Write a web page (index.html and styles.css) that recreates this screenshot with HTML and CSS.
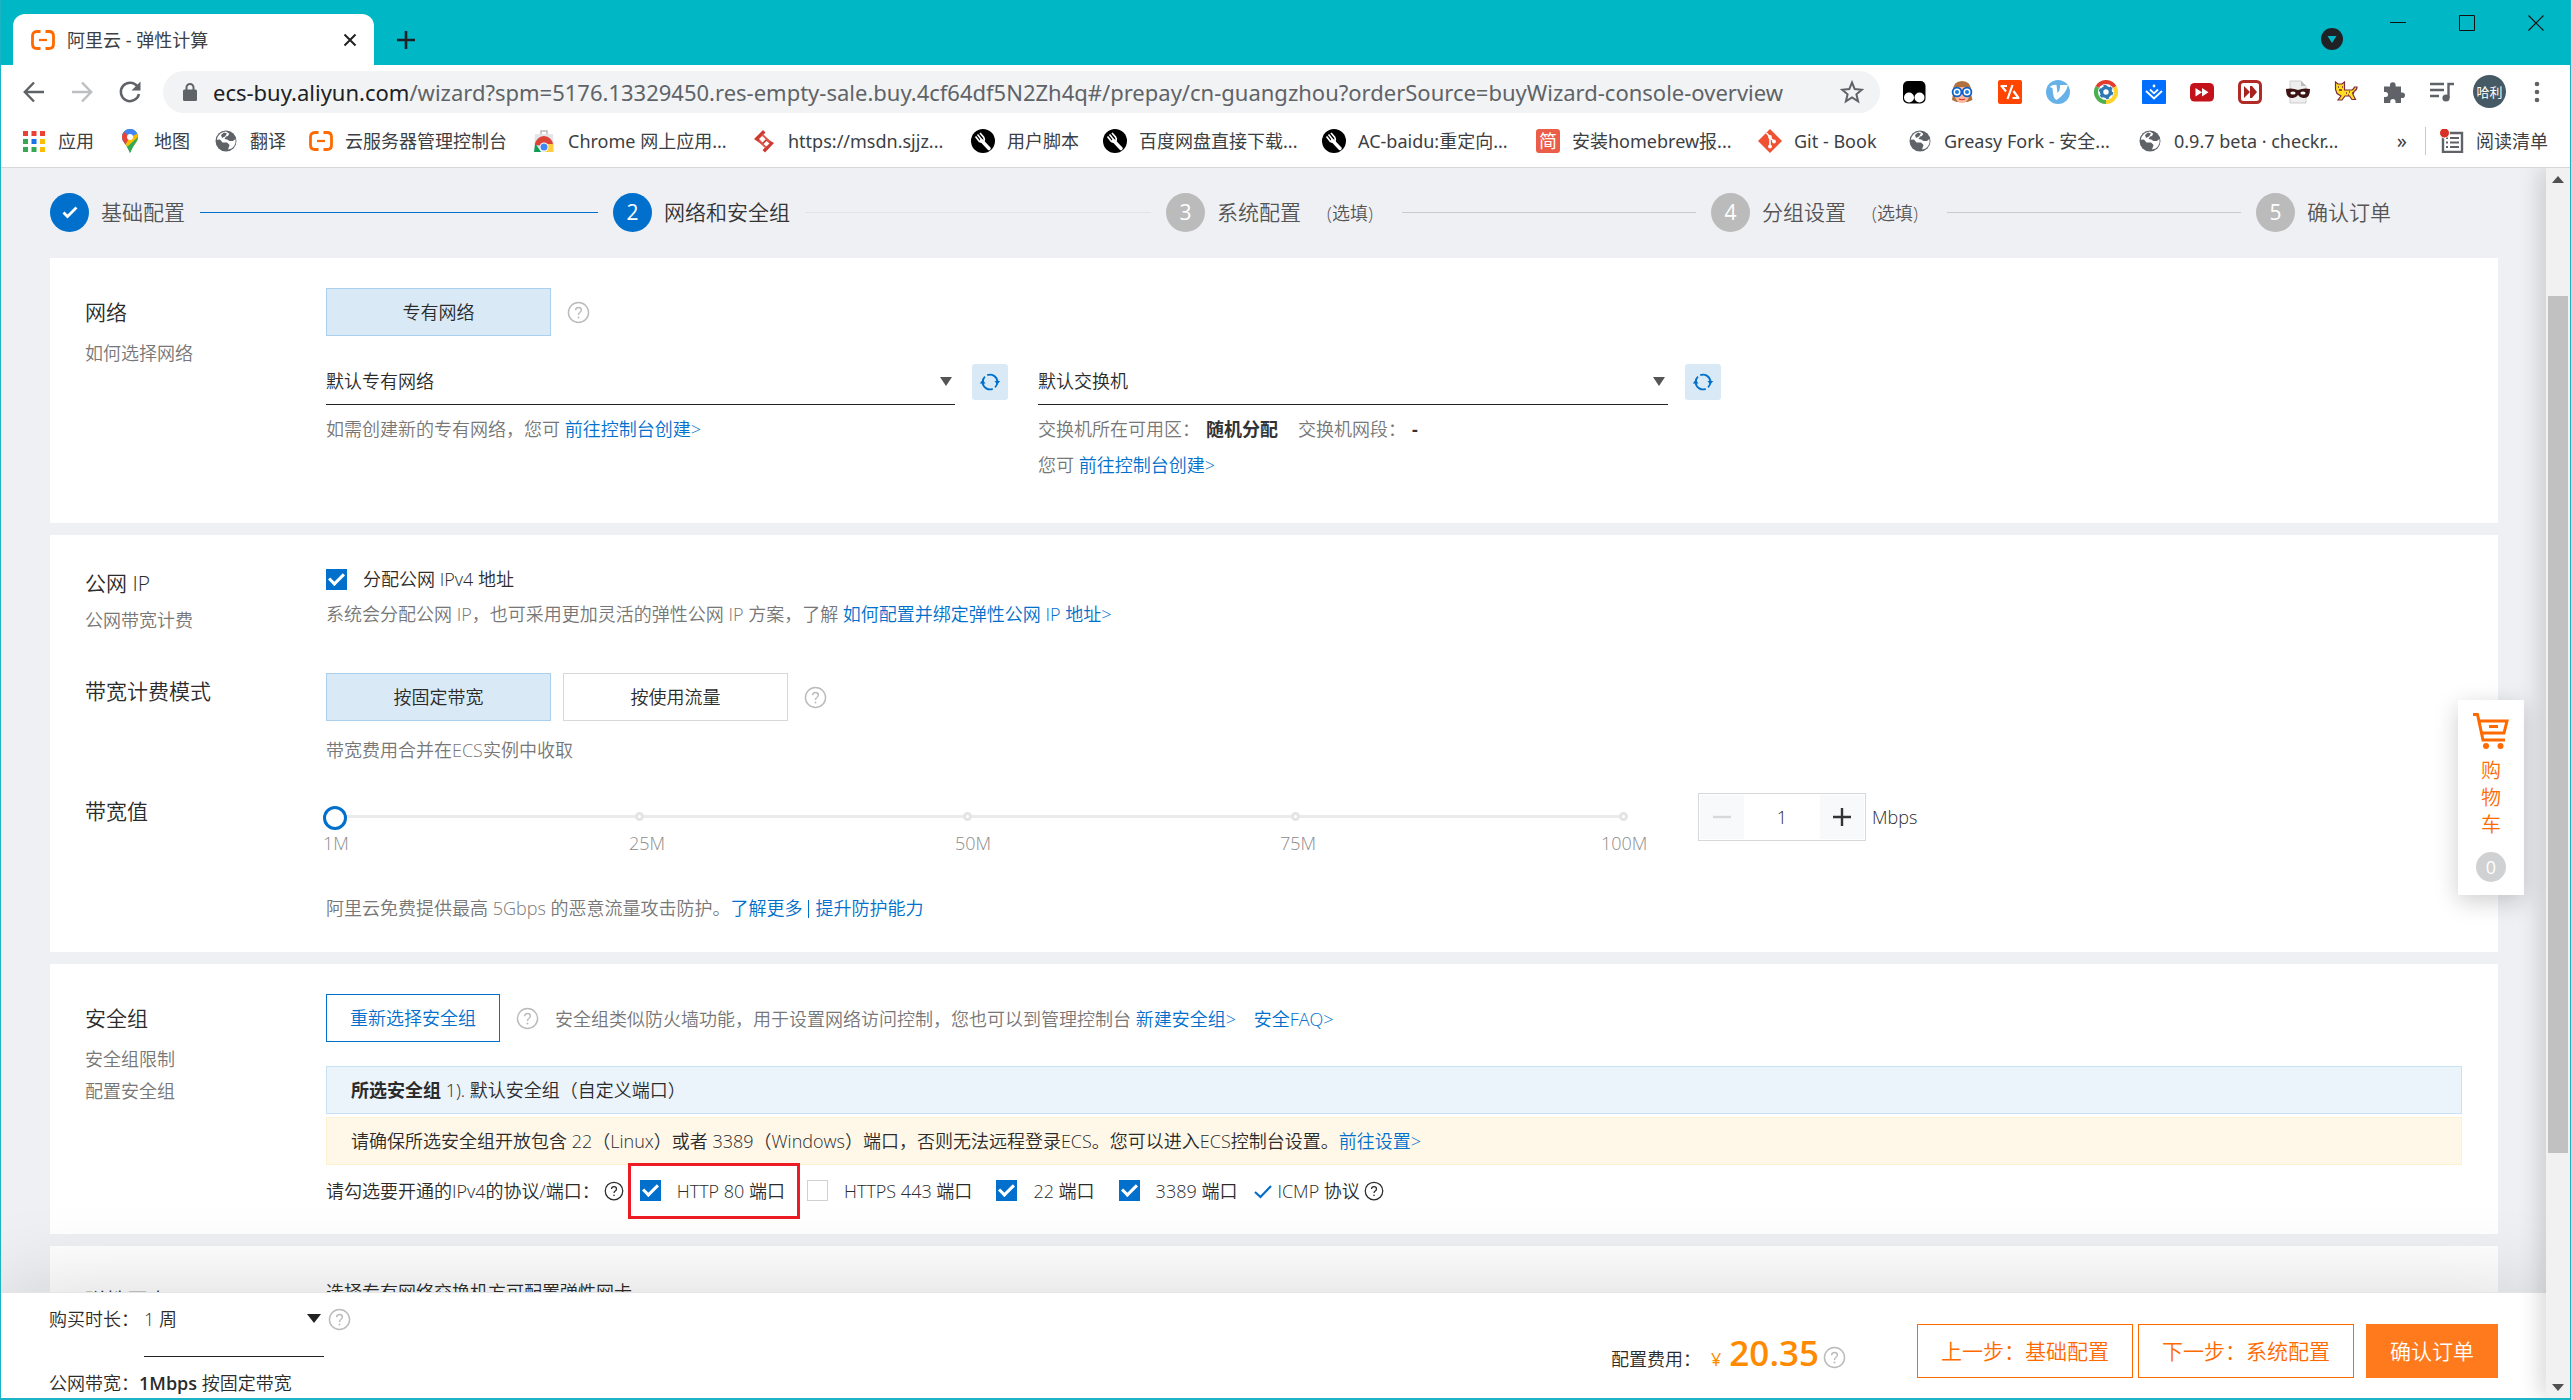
FILE: index.html
```html
<!DOCTYPE html>
<html lang="zh-CN">
<head>
<meta charset="utf-8">
<title>阿里云 - 弹性计算</title>
<link rel="stylesheet" href="styles.css">
</head>
<body>
<svg class="defs" aria-hidden="true">
  <symbol id="aliyun" viewBox="0 0 24 24"><path d="M9.500 3.500H6Q1.500 3.500 1.500 8v8q0 4.500 4.500 4.500h3.500M14.500 3.500H18q4.500 0 4.500 4.500v8q0 4.500-4.500 4.500h-3.500" fill="none" stroke="#ff6a00" stroke-width="2.800"/><path d="M8 12h8" stroke="#ff6a00" stroke-width="2.200"/></symbol>
  <symbol id="globe" viewBox="0 0 24 24"><circle cx="12" cy="12" r="10.500" fill="#5f6368"/><path d="M5 6q2-3 7-3.600l3 2.100q0 2.500-3 3l-1.500 2.500q3 0 5 2h3.500l2.400-2q1 6-3.400 9.200-2 1-4 1.200l1.600-4.400-2.600-2.500H8.500L6 10.500l-3.200.3Q3 8 5 6z" fill="#fff"/><path d="M10 3.500l3 1-2 3-3 1.500-1-3zM3 12.500l4 1 2 3 3 1v3.500q-8-.5-9-8.500z" fill="#5f6368"/></symbol>
  <symbol id="wrench" viewBox="0 0 24 24"><circle cx="12" cy="12" r="12" fill="#000"/><path d="M10.500 11.500l7.500 8" stroke="#fff" stroke-width="3.400" stroke-linecap="round"/><path d="M4.500 7.500l4 5q3 1.500 4.500-.5.800-2-.5-4L9 4" fill="none" stroke="#fff" stroke-width="1.700"/><path d="M6.500 5.500l4 5" stroke="#fff" stroke-width="1.600"/></symbol>
  <symbol id="help" viewBox="0 0 24 24"><circle cx="12" cy="12" r="10.500" fill="none" stroke="currentColor" stroke-width="1.500"/><path d="M9 9.700q0-3 3-3t3 2.800q0 1.400-1.600 2.500Q12 12.900 12 14.500" fill="none" stroke="currentColor" stroke-width="1.500"/><circle cx="12" cy="17.200" r="1" fill="currentColor"/></symbol>
  <symbol id="refresh" viewBox="0 0 24 24"><path d="M4 14.500V12a8 8 0 0 1 2.500-5.800M9 4.600A8 8 0 0 1 20 11v2M20 9.500V12a8 8 0 0 1-2.500 5.800M15 19.400A8 8 0 0 1 4 13" fill="none" stroke="#0070cc" stroke-width="2"/><path d="M.8 13.500L4 9.600l3.200 3.900zM16.800 10.800l3.200 4 3.200-4z" fill="#0070cc"/></symbol>
</svg>

<header class="browser">
  <div class="tabstrip">
    <div class="tab">
      <svg class="i24"><use href="#aliyun"/></svg>
      <span class="tab-title">阿里云 - 弹性计算</span>
      <button class="plain" aria-label="关闭标签页"><svg class="i16" viewBox="0 0 16 16"><path d="M2.500 2.500l11 11M13.500 2.500l-11 11" stroke="#202124" stroke-width="2"/></svg></button>
    </div>
    <button class="plain newtab" aria-label="新标签页"><svg class="i20" viewBox="0 0 20 20"><path d="M10 1v18M1 10h18" stroke="#202124" stroke-width="2.600"/></svg></button>
    <div class="window-buttons">
      <button class="plain tabsearch" aria-label="搜索标签页"><svg class="i24" viewBox="0 0 24 24"><circle cx="12" cy="12" r="11" fill="#202124"/><path d="M7.500 9h9L12 16z" fill="#00b7c5"/></svg></button>
      <button class="plain" aria-label="最小化"><svg class="i16" viewBox="0 0 16 16"><path d="M0 7.500h16" stroke="#111"/></svg></button>
      <button class="plain" aria-label="最大化"><svg class="i16" viewBox="0 0 16 16"><path d="M.5.5h15v15H.5z" fill="none" stroke="#111"/></svg></button>
      <button class="plain" aria-label="关闭"><svg class="i16" viewBox="0 0 16 16"><path d="M.5.5l15 15M15.500.5l-15 15" stroke="#111" stroke-width="1.200"/></svg></button>
    </div>
  </div>

  <div class="toolbar">
    <button class="plain" aria-label="后退"><svg class="i24" viewBox="0 0 24 24"><path d="M22 12H3M12 2.500L2.800 12l9.200 9.500" fill="none" stroke="#5f6368" stroke-width="2.400"/></svg></button>
    <button class="plain" aria-label="前进"><svg class="i24" viewBox="0 0 24 24"><path d="M2 12h19M12 2.500l9.200 9.500-9.200 9.500" fill="none" stroke="#bcbec1" stroke-width="2.400"/></svg></button>
    <button class="plain" aria-label="重新加载"><svg class="i24" viewBox="0 0 24 24"><path d="M19.500 6.500A9.200 9.200 0 1 0 21 14" fill="none" stroke="#5f6368" stroke-width="2.500"/><path d="M22.500 1.500v9h-9z" fill="#5f6368"/></svg></button>
    <div class="omnibox">
      <svg class="lock" viewBox="0 0 14 20"><path d="M3.500 9V5.500a3.500 3.500 0 0 1 7 0V9" fill="none" stroke="#5f6368" stroke-width="2"/><rect x="0" y="7.500" width="14" height="11.500" rx="1.500" fill="#5f6368"/></svg>
      <span class="url"><b>ecs-buy.aliyun.com</b>/wizard?spm=5176.13329450.res-empty-sale.buy.4cf64df5N2Zh4q#/prepay/cn-guangzhou?orderSource=buyWizard-console-overview</span>
      <svg class="i24" viewBox="0 0 24 24"><path d="M12 2.500l2.700 6.600 7.100.6-5.400 4.600 1.700 7L12 17.500l-6.100 3.800 1.700-7-5.400-4.600 7.100-.6z" fill="none" stroke="#5f6368" stroke-width="2"/></svg>
    </div>
    <div class="extensions">
      <svg class="i24" viewBox="0 0 24 24"><rect x="1" y="1" width="22.500" height="22.500" rx="5" fill="#000"/><circle cx="7" cy="17.500" r="5" fill="#fff"/><circle cx="17.500" cy="17.500" r="5" fill="#fff"/></svg>
      <svg class="i24" viewBox="0 0 24 24"><path d="M2 20q1-5 1-9Q3 1 12 1t9 10q0 4 1.500 9l-5 2h-11z" fill="#b0703f"/><path d="M5 8q7-2 14 0v9q-2 6-7 6t-7-6z" fill="#ffb79a"/><circle cx="7" cy="12" r="4.400" fill="#fff" stroke="#0c60c8" stroke-width="1.800"/><circle cx="17" cy="12" r="4.400" fill="#fff" stroke="#0c60c8" stroke-width="1.800"/><circle cx="7" cy="12" r="2" fill="#1c7de0"/><circle cx="17" cy="12" r="2" fill="#1c7de0"/><path d="M9 19q3 1.500 6 0" fill="none" stroke="#c33" stroke-width="1.200"/></svg>
      <svg class="i24" viewBox="0 0 24 24"><rect width="24" height="24" rx="2" fill="#ff4500"/><path d="M9 6H3.500l4.500 5.500M14.500 5L9.500 19M15.500 11l5 7H14.500" fill="none" stroke="#fff" stroke-width="2.200" stroke-linejoin="round"/></svg>
      <svg class="i24" viewBox="0 0 24 24"><circle cx="12" cy="12" r="12" fill="#66b2e8"/><path d="M3.500 7q4-3 7-2l1 8q3-3 2.500-8h8q-2 9-11.500 15Q7 19 6.500 8z" fill="#fff"/></svg>
      <svg class="i24" viewBox="0 0 24 24"><path d="M12 12L1.600 6a12 12 0 0 1 20.800 0z" fill="#e33b2e"/><path d="M12 12L22.400 6A12 12 0 0 1 12 24z" fill="#fdd32c"/><path d="M12 12v12A12 12 0 0 1 1.600 6z" fill="#4caf50"/><circle cx="12" cy="12" r="8" fill="#fff"/><circle cx="12" cy="12" r="4.400" fill="none" stroke="#2f77b5" stroke-width="3.400"/><circle cx="12" cy="12" r="6" fill="none" stroke="#2f77b5" stroke-width="2.400" stroke-dasharray="3 3.280"/></svg>
      <svg class="i24" viewBox="0 0 24 24"><rect width="24" height="24" rx="1" fill="#006eff"/><path d="M4 11l8 7.500 8-7.500M8 9.500l4 3.800 4-3.800" fill="none" stroke="#fff" stroke-width="1.800"/><circle cx="12" cy="6" r="1.400" fill="#fff"/></svg>
      <svg class="i24" viewBox="0 0 24 24"><rect x="0" y="3" width="24" height="18.500" rx="4.500" fill="#c4121a"/><path d="M5.500 8l6.500 4.200-6.500 4.200zM12 8l6.500 4.200-6.500 4.200z" fill="#fff"/></svg>
      <svg class="i24" viewBox="0 0 24 24"><rect x="1.500" y="1.500" width="21" height="21" rx="4" fill="#fff" stroke="#b02a27" stroke-width="3"/><path d="M6 6l6 6-6 6zM12 6h2l5 6-5 6h-2z" fill="#a8221f"/></svg>
      <svg class="i24" viewBox="0 0 24 24"><path d="M4 1h11l5 5v17H4z" fill="#eee" stroke="#ccc"/><path d="M15 1v5h5z" fill="#bbb"/><path d="M0 9q6-1.500 12 1 6-2.500 12-1 0 10-7 9-3 0-5-3-2 3-5 3-7 1-7-9z" fill="#3c1414"/><ellipse cx="7" cy="13" rx="2.600" ry="1.500" fill="#fff"/><ellipse cx="17" cy="13" rx="2.600" ry="1.500" fill="#fff"/></svg>
      <svg class="i24" viewBox="0 0 24 24"><path d="M1.500 2l2.500 2h4l2.500-2v8H18q2-1 2.500-3H23q0 3-3 4.500l-1 3 2.500 5H18L15.500 16H11l-3 4H4l3-4-4-2.500-1.500-4z" fill="#fd2" stroke="#7d2a3c" stroke-width="1.200"/><path d="M4 7h1M8 7h1M12 13h1M15 12h1M14 15h1M18 13h1M5 10h3" stroke="#7d2a3c" stroke-width="1.300"/></svg>
      <svg class="i24" viewBox="0 0 24 24"><path d="M2 6.500h6V5a2.800 2.800 0 0 1 5.600 0v1.500H19v6h1.200a2.800 2.800 0 0 1 0 5.600H19V23h-5.500v-1.500a2.600 2.600 0 0 0-5.200 0V23H2v-6h1.500a2.500 2.500 0 0 0 0-5H2z" fill="#5f6368"/></svg>
      <svg class="i24" viewBox="0 0 24 24"><path d="M0 4h14M0 10h14M0 16h9M18.500 18V4H24" fill="none" stroke="#5f6368" stroke-width="2.400"/><circle cx="16" cy="18" r="3.600" fill="#5f6368"/></svg>
    </div>
    <button class="plain avatar">哈利</button>
    <button class="plain" aria-label="菜单"><svg class="i24" viewBox="0 0 24 24"><g fill="#5f6368"><circle cx="12" cy="4" r="2.300"/><circle cx="12" cy="12" r="2.300"/><circle cx="12" cy="20" r="2.300"/></g></svg></button>
  </div>

  <nav class="bookmarks">
    <a href="#"><svg class="i24" viewBox="0 0 24 24"><g fill="#ea4335"><path d="M1 2h5v5H1zM9.500 2h5v5h-5zM18 2h5v5h-5z"/></g><path d="M1 10h5v5H1zM1 18h5v5H1z" fill="#34a853"/><path d="M9.500 10h5v5h-5z" fill="#1a73e8"/><path d="M18 10h5v5h-5zM18 18h5v5h-5z" fill="#fbbc04"/><path d="M9.500 18h5v5h-5z" fill="#34a853"/></svg>应用</a>
    <a href="#"><svg class="i24" viewBox="0 0 24 24"><path d="M12 0a8 8 0 0 1 8 8q0 3-3.500 7.500Q14 19 12 24q-2-5-4.500-8.500Q4 11 4 8a8 8 0 0 1 8-8z" fill="#34a853"/><path d="M12 0a8 8 0 0 1 7.300 4.700L7.500 15.500Q4 11 4 8a8 8 0 0 1 8-8z" fill="#4285f4"/><path d="M6 3L12 8 7.500 15.500Q4 11 4 8q0-3 2-5z" fill="#ea4335"/><path d="M12 8l7.300-3.300Q21 9 17 15l-5 5-4.500-4.500z" fill="#fbbc04"/><path d="M20 8q0 3-3.500 7.500Q14 19 12 24q-1.500-4-3-6z" fill="#34a853"/><circle cx="12" cy="8" r="3" fill="#fff"/></svg>地图</a>
    <a href="#"><svg class="i24"><use href="#globe"/></svg>翻译</a>
    <a href="#"><svg class="i24"><use href="#aliyun"/></svg>云服务器管理控制台</a>
    <a href="#"><svg class="i24" viewBox="0 0 24 24"><path d="M3 5h18l1.500 18h-21z" fill="#e3e5e8"/><path d="M9 5V2h6v3" fill="none" stroke="#bbb" stroke-width="1.500"/><path d="M3 16a9 9 0 0 1 18 0v1h-9z" fill="#db4437"/><path d="M3 16l5 7H2zM3 14l6 9H3z" fill="#0f9d58"/><path d="M14 15h7v8h-8z" fill="#ffcd40"/><circle cx="12" cy="18" r="4.500" fill="#fff"/><circle cx="12" cy="18" r="3.500" fill="#4285f4"/></svg>Chrome 网上应用...</a>
    <a href="#"><svg class="i24" viewBox="0 0 24 24"><path d="M11 1l2.500 2.500L7 10l3.500 3.500 4-4L22 14l-9 9.500-2.500-2.500 7-6.500-3-2.500-4 4L2 10z" fill="#d0392f"/><path d="M10 5.500l8 7.500M7 12l7 6.500" stroke="#e0584a" stroke-width="2"/></svg>https://msdn.sjjz...</a>
    <a href="#"><svg class="i24"><use href="#wrench"/></svg>用户脚本</a>
    <a href="#"><svg class="i24"><use href="#wrench"/></svg>百度网盘直接下载...</a>
    <a href="#"><svg class="i24"><use href="#wrench"/></svg>AC-baidu:重定向...</a>
    <a href="#"><span class="jian">简</span>安装homebrew报...</a>
    <a href="#"><svg class="i24" viewBox="0 0 24 24"><path d="M12 0l12 12-12 12L0 12z" fill="#f05133"/><path d="M8.500 4l3.500 4v9M12 8.500l4 4" stroke="#fff" stroke-width="1.600" fill="none"/><g fill="#fff"><circle cx="12" cy="8" r="1.900"/><circle cx="12" cy="17.500" r="1.900"/><circle cx="16" cy="12.500" r="1.900"/></g></svg>Git - Book</a>
    <a href="#"><svg class="i24"><use href="#globe"/></svg>Greasy Fork - 安全...</a>
    <a href="#"><svg class="i24"><use href="#globe"/></svg>0.9.7 beta · checkr...</a>
    <button class="plain more">»</button>
    <a href="#" class="reading"><svg class="i24" viewBox="0 0 24 24"><path d="M3 4h19v19H3z" fill="none" stroke="#5f6368" stroke-width="2.400"/><path d="M6 9h2M6 13.500h2M6 18h2M10 9h9M10 13.500h9M10 18h9" stroke="#5f6368" stroke-width="2"/><circle cx="4.500" cy="4" r="5" fill="#d93025" stroke="#fff"/></svg>阅读清单</a>
  </nav>
</header>

<div class="viewport">
  <main class="page">
    <ol class="steps">
      <li class="done"><i><svg class="i20" viewBox="0 0 20 20"><path d="M3.500 10.500l4 4 9-9" fill="none" stroke="#fff" stroke-width="2.800"/></svg></i>基础配置</li>
      <li class="current"><i>2</i>网络和安全组</li>
      <li><i>3</i>系统配置<small>(选填)</small></li>
      <li><i>4</i>分组设置<small>(选填)</small></li>
      <li><i>5</i>确认订单</li>
    </ol>

    <section class="card network">
      <div class="row">
        <div class="label"><h2>网络</h2><a href="#">如何选择网络</a></div>
        <div class="field">
          <div class="line">
            <button class="choice on">专有网络</button>
            <svg class="help"><use href="#help"/></svg>
          </div>
          <div class="selects">
            <div>
              <div class="line pick">
                <span class="select"><select aria-label="专有网络"><option>默认专有网络</option></select></span>
                <button class="refresh" aria-label="刷新"><svg><use href="#refresh"/></svg></button>
              </div>
              <p>如需创建新的专有网络，您可 <a href="#">前往控制台创建&gt;</a></p>
            </div>
            <div>
              <div class="line pick">
                <span class="select"><select aria-label="交换机"><option>默认交换机</option></select></span>
                <button class="refresh" aria-label="刷新"><svg><use href="#refresh"/></svg></button>
              </div>
              <p>交换机所在可用区：<strong>随机分配</strong><span class="segment">交换机网段：</span><strong>-</strong></p>
              <p>您可 <a href="#">前往控制台创建&gt;</a></p>
            </div>
          </div>
        </div>
      </div>
    </section>

    <section class="card public-ip">
      <div class="row row-ip">
        <div class="label"><h2>公网 IP</h2><a href="#">公网带宽计费</a></div>
        <div class="field">
          <label class="tick"><input type="checkbox" checked>分配公网 IPv4 地址</label>
          <p>系统会分配公网 IP，也可采用更加灵活的弹性公网 IP 方案，了解 <a href="#">如何配置并绑定弹性公网 IP 地址&gt;</a></p>
        </div>
      </div>
      <div class="row row-mode">
        <div class="label"><h2>带宽计费模式</h2></div>
        <div class="field">
          <div class="line">
            <button class="choice on">按固定带宽</button>
            <button class="choice">按使用流量</button>
            <svg class="help"><use href="#help"/></svg>
          </div>
          <p>带宽费用合并在ECS实例中收取</p>
        </div>
      </div>
      <div class="row row-value">
        <div class="label"><h2>带宽值</h2></div>
        <div class="field">
          <div class="line bandwidth">
            <div class="slider">
              <input type="range" min="1" max="100" value="1" aria-label="带宽值">
              <span class="dot" style="left:24%"></span><span class="dot" style="left:49%"></span><span class="dot" style="left:74%"></span><span class="dot" style="left:99%"></span>
              <div class="scale"><span>1M</span><span>25M</span><span>50M</span><span>75M</span><span>100M</span></div>
            </div>
            <div class="stepper">
              <button disabled aria-label="减少"><svg class="i20" viewBox="0 0 20 20"><path d="M1 10h18" stroke="#d7d8d9" stroke-width="2.400"/></svg></button>
              <input type="text" value="1" aria-label="带宽">
              <button aria-label="增加"><svg class="i20" viewBox="0 0 20 20"><path d="M1 10h18M10 1v18" stroke="#333" stroke-width="2.400"/></svg></button>
            </div>
            <span class="unit">Mbps</span>
          </div>
          <p>阿里云免费提供最高 5Gbps 的恶意流量攻击防护。<a href="#">了解更多</a><span class="divider"></span><a href="#">提升防护能力</a></p>
        </div>
      </div>
    </section>

    <section class="card security">
      <div class="row">
        <div class="label"><h2>安全组</h2><a href="#">安全组限制</a><a href="#">配置安全组</a></div>
        <div class="field">
          <div class="line">
            <button class="outline">重新选择安全组</button>
            <svg class="help"><use href="#help"/></svg>
            <p>安全组类似防火墙功能，用于设置网络访问控制，您也可以到管理控制台 <a href="#">新建安全组&gt;</a> <a href="#" class="faq">安全FAQ&gt;</a></p>
          </div>
          <div class="notice info"><strong>所选安全组</strong> 1). 默认安全组（自定义端口）</div>
          <div class="notice warn">请确保所选安全组开放包含 22（Linux）或者 3389（Windows）端口，否则无法远程登录ECS。您可以进入ECS控制台设置。<a href="#">前往设置&gt;</a></div>
          <div class="ports">
            <span>请勾选要开通的IPv4的协议/端口：</span>
            <svg class="i20"><use href="#help"/></svg>
            <label class="tick marked"><input type="checkbox" checked>HTTP 80 端口</label>
            <label class="tick"><input type="checkbox">HTTPS 443 端口</label>
            <label class="tick"><input type="checkbox" checked>22 端口</label>
            <label class="tick"><input type="checkbox" checked>3389 端口</label>
            <span class="icmp"><svg class="i20" viewBox="0 0 20 20"><path d="M2 11l5.500 5L18 5" fill="none" stroke="#0070cc" stroke-width="2.200"/></svg>ICMP 协议 <svg class="i20"><use href="#help"/></svg></span>
          </div>
        </div>
      </div>
    </section>

    <section class="card nic">
      <div class="row">
        <div class="label"><h2>弹性网卡</h2></div>
        <div class="field">选择专有网络交换机方可配置弹性网卡</div>
      </div>
    </section>

    <aside class="cart">
      <svg class="cart-icon" viewBox="0 0 36 36"><path d="M0 1.500h4.500L10 27h22M5.500 8H34l-3 12H8.500" fill="none" stroke="#ff6a00" stroke-width="3"/><path d="M16 13.500h9" stroke="#ff6a00" stroke-width="3"/><circle cx="13" cy="33" r="3" fill="#ff6a00"/><circle cx="27.500" cy="33" r="3" fill="#ff6a00"/></svg>
      <a href="#">购物车</a>
      <span class="count">0</span>
    </aside>

    <footer class="summary">
      <div class="terms">
        <div class="term"><label for="duration">购买时长：</label><span class="select short"><select id="duration"><option>1 周</option></select></span><svg class="help"><use href="#help"/></svg></div>
        <div class="term">公网带宽：<strong>1Mbps</strong>&nbsp;按固定带宽</div>
      </div>
      <div class="price"><span>配置费用：</span><em>¥</em><b>20.35</b><svg class="help"><use href="#help"/></svg></div>
      <button class="nav-btn">上一步：基础配置</button>
      <button class="nav-btn">下一步：系统配置</button>
      <button class="nav-btn primary">确认订单</button>
    </footer>
  </main>
  <div class="scrollbar"><i class="up"></i><i class="thumb"></i><i class="down"></i></div>
</div>
</body>
</html>
```
FILE: styles.css
```css
* { box-sizing: border-box; }
body {
  margin: 0;
  height: 100vh;
  display: flex;
  flex-direction: column;
  overflow: hidden;
  border: 1px solid #1cb3c4;
  border-width: 0 1px 2px 1px;
  background: #fff;
  color: #2b2b2b;
  font: 350 18px/28px "Open Sans", "Noto Sans CJK SC", sans-serif;
}
button, input, select { font: inherit; color: inherit; margin: 0; }
button { cursor: pointer; }
a { color: #0070cc; text-decoration: none; }
p, h2, ol { margin: 0; padding: 0; }
svg { flex: none; display: block; }
.defs { position: absolute; width: 0; height: 0; }
.i16 { width: 16px; height: 16px; }
.i20 { width: 20px; height: 20px; }
.i24 { width: 24px; height: 24px; }
.plain { border: 0; padding: 0; background: none; display: flex; align-items: center; }

/* browser chrome */
.browser { flex: none; font-weight: 400; font-family: "Noto Sans", "Noto Sans CJK SC", sans-serif; }
.tabstrip { height: 65px; background: #00b7c5; display: flex; align-items: flex-end; padding-left: 12px; }
.tab {
  width: 361px; height: 51px; padding: 0 16px 0 18px;
  display: flex; align-items: center;
  background: #fff; border-radius: 12px 12px 0 0;
}
.tab .i24 { margin-right: 12px; }
.tab-title { flex: 1; color: #3c4043; }
.newtab { align-self: center; margin: 14px 0 0 22px; }
.window-buttons { margin-left: auto; align-self: flex-start; display: flex; gap: 53px; padding: 15px 26px 0 0; }
.window-buttons > :not(.tabsearch) { height: 16px; }
.tabsearch { margin-top: 12px; margin-right: -7px; }
.toolbar { height: 53px; display: flex; align-items: center; padding: 0 21px 0 21px; gap: 24px; }
.omnibox {
  flex: 1; height: 42px; margin: 0 -2px 0 -3px; padding: 0 16px 0 20px;
  display: flex; align-items: center; gap: 16px;
  background: #f1f3f4; border-radius: 21px; overflow: hidden;
}
.lock { width: 14px; height: 20px; }
.url { flex: 1; font-size: 22px; color: #5f6368; white-space: nowrap; overflow: hidden; }
.url b { color: #202124; font-weight: 400; }
.extensions { display: flex; gap: 24px; }
.avatar { width: 33px; height: 33px; border-radius: 50%; background: #455a64; color: #fff; font-size: 13px; justify-content: center; margin: 0 -5px 0 -5px; }
.bookmarks {
  height: 50px; padding: 0 14px 4px 21px; border-bottom: 1px solid #d5d8db;
  display: grid; align-items: center; white-space: nowrap;
  grid-template-columns: 96px 96px 95px 223px 220px 219px 132px 219px 214px 222px 150px 230px 1fr auto 131px;
}
.bookmarks a { display: flex; align-items: center; gap: 12px; color: #3c4043; }
.more { margin-right: 18px; font-size: 20px; color: #3c4043; }
.bookmarks .reading { border-left: 1px solid #c8cbce; padding-left: 14px; }
.jian { width: 24px; height: 24px; border-radius: 3px; background: #ea5d48; color: #fff; line-height: 24px; text-align: center; }

/* page */
.viewport { flex: 1; min-height: 0; display: flex; }
.page {
  flex: 1; min-width: 0; position: relative; overflow: hidden;
  padding: 0 48px 0 49px; background: #eff0f4;
}
.page::after { content: ""; position: absolute; z-index: 5; top: 0; bottom: 0; right: -10px; width: 10px; box-shadow: 0 0 24px rgba(0, 0, 0, .35); }
.steps { display: flex; align-items: center; height: 90px; padding-bottom: 2px; list-style: none; font-size: 21px; color: #555; }
.steps li { flex: 545 0 0; display: flex; align-items: center; white-space: nowrap; }
.steps li:first-child { flex-grow: 563; }
.steps li:nth-child(2) { flex-grow: 553; }
.steps li:last-child { flex-grow: 242; }
.steps li:not(:last-child)::after { content: ""; flex: 1; height: 1px; margin: 0 15px; background: #c8cace; }
.steps li.current::after { background: #e2e3e5; }
.steps li.done::after { background: #0070cc; }
.steps i { width: 39px; height: 39px; margin-right: 12px; border-radius: 50%; background: #bbb; color: #fff; font-style: normal; font-weight: 400; display: flex; align-items: center; justify-content: center; }
.steps .done i, .steps .current i { background: #0070cc; }
.steps .current { color: #333; }
.steps small { font-size: 18px; margin: 2px 14px 0 26px; }

.card { background: #fff; margin-bottom: 12px; padding: 30px 36px 0 35px; }
.row { display: grid; grid-template-columns: 241px 1fr; }
.label a { display: block; color: #777; line-height: 32px; }
h2 { font-size: 21px; line-height: 48px; font-weight: 350; }
.field p { color: #777; }
.line { display: flex; align-items: center; }
.choice, .outline { height: 48px; border: 1px solid #d7d8d9; background: #fff; }
.choice { width: 225px; margin-right: 12px; }
.choice.on { background: #d9eaf6; border-color: #abd0ee; }
.outline { width: 174px; border-color: #0070cc; color: #0070cc; padding: 0; }
.help { width: 23px; height: 23px; color: #bbb; margin-left: 4px; }
.select { position: relative; flex: 1; display: flex; border-bottom: 1px solid #222; }
.select select { width: 100%; height: 45px; padding: 0 0 1px; border: 0; background: none; appearance: none; }
.select::after { content: ""; position: absolute; right: 3px; top: 18px; border: 6px solid transparent; border-top: 9px solid #555; border-bottom: 0; }
.network { height: 265px; }
.network h2 + a { margin-top: 1px; }
.selects { display: grid; grid-template-columns: 712px 683px; margin-top: 23px; }
.selects > div:first-child { padding-right: 30px; }
.selects .line { align-items: flex-start; margin-bottom: 10px; }
.selects p + p { margin-top: 8px; }
.refresh { width: 36px; height: 36px; margin: 5px 0 0 17px; border: 0; border-radius: 3px; background: #d9eaf6; padding: 7px; }
.refresh svg { width: 22px; height: 22px; }
.selects strong { margin-left: 6px; color: #333; }
.segment { margin-left: 20px; }

.public-ip { height: 417px; }
.public-ip h2 { line-height: 36px; }
.row-ip { height: 108px; }
.row-ip .label a { margin-top: 3px; }
.row-ip p { margin-top: 7px; }
.row-mode { height: 120px; }
.row-mode p { margin-top: 15px; }
.tick { display: flex; align-items: center; gap: 16px; }
.tick input { appearance: none; width: 21px; height: 21px; border: 1px solid #d0d1d2; background: #fff; display: grid; place-items: center; }
.tick input:checked { background: #0070cc; border-color: #0070cc; }
.tick input:checked::after { content: ""; width: 12px; height: 6px; border: solid #fff; border-width: 0 0 3px 3px; transform: translateY(-2px) rotate(-45deg); }
.bandwidth { align-items: flex-start; }
.slider { width: 1312px; margin-left: -3px; position: relative; padding-top: 13px; }
.slider input { display: block; width: 100%; height: 24px; appearance: none; background: linear-gradient(#ebebeb, #ebebeb) 12px 9px / 1288px 3px no-repeat; }
.slider input::-webkit-slider-thumb { appearance: none; width: 24px; height: 24px; border: 3px solid #0070cc; border-radius: 50%; background: #fff; }
.dot { position: absolute; top: 19px; width: 9px; height: 9px; margin-left: -3px; border: 3px solid #e4e4e4; border-radius: 50%; background: #fff; }
.scale { display: grid; grid-template-columns: 306px 326px 325px 321px auto; color: #8c8c8c; line-height: 26px; margin-bottom: 2px; }
.stepper { margin: 0 6px 0 63px; width: 168px; height: 48px; padding: 1px; border: 1px solid #d7d8d9; display: flex; }
.stepper input { width: 76px; border: 0; padding: 0; text-align: center; }
.stepper button { flex: 1; border: 0; padding: 0; background: #f7f9fa; display: flex; align-items: center; justify-content: center; }
.unit { line-height: 48px; }
.row-value p { margin-top: 36px; }
.divider { display: inline-block; width: 1px; height: 18px; margin: 0 6px; background: #0070cc; vertical-align: -3px; }

.security { height: 270px; }
.security .label h2 + a { margin-top: 1px; }
.security .help { margin-left: 16px; margin-right: 16px; }
.security .line p { padding-top: 2px; }
.faq { margin-left: 13px; }
.notice { height: 48px; line-height: 46px; padding: 0 24px; border: 1px solid #c9e2f2; background: #ebf3fb; }
.notice.info { margin-top: 24px; }
.notice.warn { margin-top: 3px; background: #fff8e9; border-color: #fdf1d0; }
.ports { display: flex; align-items: center; height: 51px; }
.ports > .i20 { margin-left: 4px; }
.ports .tick { margin-right: 24px; }
.ports .marked { border: 3px solid #ed1c24; height: 56px; padding: 0 12px 0 9px; margin: 0 7px 0 4px; }
.icmp { display: flex; align-items: center; gap: 4px; margin-left: -8px; }
.nic .field { line-height: 32px; }

/* floating cart */
.cart {
  position: absolute; right: 22px; top: 532px; width: 66px; padding: 13px 0;
  display: flex; flex-direction: column; align-items: center;
  background: #fff; box-shadow: 0 6px 24px rgba(0, 0, 0, .2); z-index: 3;
}
.cart-icon { width: 36px; height: 36px; }
.cart a { width: 20px; margin: 8px 0 14px; font-size: 20px; line-height: 27px; color: #ff6a00; }
.count { width: 30px; height: 30px; border-radius: 50%; background: #d0d1d2; color: #fff; font-weight: 400; line-height: 30px; text-align: center; }

/* order bar */
.summary {
  position: absolute; left: 0; right: 0; bottom: 0; height: 106px; padding: 0 48px;
  display: flex; align-items: flex-start; background: #fff;
  border-top: 1px solid #e5e5e5; box-shadow: 0 0 90px rgba(0, 0, 0, .16); z-index: 2;
}
.terms { margin-right: auto; }
.term { display: flex; height: 62px; padding-top: 12px; }
.term:last-child { padding-top: 14px; }
.term .help { margin-top: 3px; }
.short { width: 180px; flex: none; margin-left: 5px; height: 52px; }
.select.short select { height: 28px; padding: 0; }
.short::after { top: 9px; border-width: 9px 7px 0; border-top-color: #222; }
.summary strong { font-weight: 600; }
.price { display: flex; align-items: baseline; margin-top: 36px; margin-right: 66px; }
.price em { font-style: normal; font-weight: 500; color: #ff8a00; margin: 0 8px 0 10px; }
.price b { font-size: 35px; line-height: 48px; font-weight: 600; color: #ff8a00; }
.price .help { align-self: center; margin-top: 9px; }
.nav-btn { width: 216px; height: 54px; margin: 31px 0 0 5px; border: 1px solid #ff6a00; background: #fff; color: #ff6a00; font-size: 21px; padding: 0; }
.nav-btn.primary { width: 132px; margin-left: 12px; background: #ff7a1c; border-color: #ff7a1c; color: #fff; }

/* scrollbar */
.scrollbar { flex: none; width: 24px; background: #f1f1f1; display: grid; grid-template-rows: 22px 106px 857px 1fr 22px; justify-items: center; align-items: center; }
.scrollbar .thumb { grid-row: 3; width: 20px; height: 100%; background: #c1c1c1; }
.scrollbar .up, .scrollbar .down { border: 6px solid transparent; }
.scrollbar .up { border-top: 0; border-bottom: 7px solid #505050; }
.scrollbar .down { grid-row: 5; border-bottom: 0; border-top: 7px solid #505050; }
```
